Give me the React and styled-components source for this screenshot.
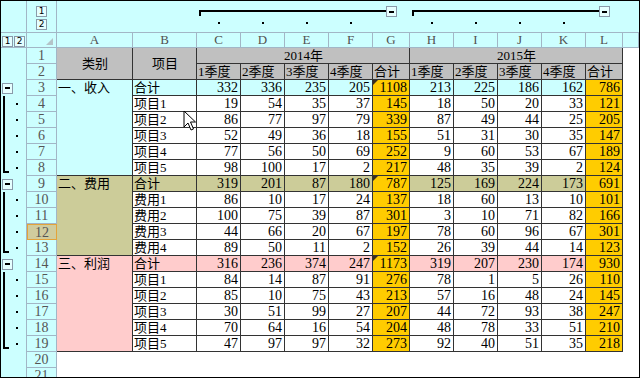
import React from 'react';
import styled, { createGlobalStyle } from 'styled-components';

const CYAN = '#ccffff';
const OLIVE = '#cccc99';
const PINK = '#ffcccc';
const GOLD = '#ffcc00';
const GRAY = '#c0c0c0';
const HEAD_LINE = '#a2b6c6';
const GRID_LINE = '#333';

const COLS = ['A', 'B', 'C', 'D', 'E', 'F', 'G', 'H', 'I', 'J', 'K', 'L', ''];

const sections = [
  {
    label: '一、收入', tone: CYAN, rows: [
      ['合计', 332, 336, 235, 205, 1108, 213, 225, 186, 162, 786],
      ['项目1', 19, 54, 35, 37, 145, 18, 50, 20, 33, 121],
      ['项目2', 86, 77, 97, 79, 339, 87, 49, 44, 25, 205],
      ['项目3', 52, 49, 36, 18, 155, 51, 31, 30, 35, 147],
      ['项目4', 77, 56, 50, 69, 252, 9, 60, 53, 67, 189],
      ['项目5', 98, 100, 17, 2, 217, 48, 35, 39, 2, 124],
    ],
  },
  {
    label: '二、费用', tone: OLIVE, rows: [
      ['合计', 319, 201, 87, 180, 787, 125, 169, 224, 173, 691],
      ['费用1', 86, 10, 17, 24, 137, 18, 60, 13, 10, 101],
      ['费用2', 100, 75, 39, 87, 301, 3, 10, 71, 82, 166],
      ['费用3', 44, 66, 20, 67, 197, 78, 60, 96, 67, 301],
      ['费用4', 89, 50, 11, 2, 152, 26, 39, 44, 14, 123],
    ],
  },
  {
    label: '三、利润', tone: PINK, rows: [
      ['合计', 316, 236, 374, 247, 1173, 319, 207, 230, 174, 930],
      ['项目1', 84, 14, 87, 91, 276, 78, 1, 5, 26, 110],
      ['项目2', 85, 10, 75, 43, 213, 57, 16, 48, 24, 145],
      ['项目3', 30, 51, 99, 27, 207, 44, 72, 93, 38, 247],
      ['项目4', 70, 64, 16, 54, 204, 48, 78, 33, 51, 210],
      ['项目5', 47, 97, 97, 32, 273, 92, 40, 51, 35, 218],
    ],
  },
];

// sheet row n sits on grid row n + 3, column A on grid column 3
let next = 3;
const blocks = sections.map(sec => {
  const start = next;
  next += sec.rows.length;
  return { ...sec, start, end: next - 1 };
});

const ACTIVE_ROW = 12;

const Global = createGlobalStyle`
  body { margin: 0; background: #fff; }
`;

const Sheet = styled.div`
  position: relative;
  width: 640px;
  height: 378px;
  box-sizing: border-box;
  border: 1px solid #000;
  overflow: hidden;
  display: grid;
  grid-template-columns: 26px 30px 76px 64px repeat(4, 44px) 37px repeat(4, 44px) 37px 1fr;
  grid-template-rows: 17px 15px 15px repeat(21, 16px);
  background: ${CYAN};
  font-family: "Liberation Serif", "Noto Sans CJK SC", serif;
`;

const Pad = styled.div`
  grid-column: ${p => p.$col};
  grid-row: ${p => p.$row};
  box-sizing: border-box;
  border-right: 1px solid ${HEAD_LINE};
  border-bottom: 1px solid ${HEAD_LINE};
`;

const Band = styled.div`
  grid-column: 3 / -1;
  grid-row: 1 / 3;
  border-bottom: 1px solid ${HEAD_LINE};
`;

const LevelStack = styled(Pad)`
  display: flex;
  flex-direction: ${p => (p.$across ? 'row' : 'column')};
  align-items: center;
  justify-content: ${p => (p.$across ? 'flex-start' : 'flex-start')};
  gap: ${p => (p.$across ? '1px' : '2px')};
  padding: ${p => (p.$across ? '3px 0 0 1px' : '5px 0 0 0')};
  align-content: flex-start;
  align-items: ${p => (p.$across ? 'flex-start' : 'center')};
`;

const LevelBtn = styled.div`
  width: 11px;
  height: 11px;
  box-sizing: border-box;
  border: 1px solid #8a9aaa;
  background: #e6ffff;
  font: 9px/9px "DejaVu Sans", sans-serif;
  color: #000;
  text-align: center;
`;

const SelectAll = styled(Pad)`
  display: flex;
  justify-content: flex-end;
  align-items: flex-end;
  padding: 0 3px 2px 0;
  &::after {
    content: '';
    border-left: 7px solid transparent;
    border-bottom: 7px solid #b4c4c8;
  }
`;

const ColHead = styled(Pad)`
  font: 13px/14px "Liberation Serif", serif;
  color: #505050;
  text-align: center;
`;

const RowHead = styled(Pad)`
  font: 14px/15px "Liberation Serif", serif;
  color: #555;
  text-align: center;
  background: ${p => (p.$active ? '#d0cc9e' : CYAN)};
  border: ${p => (p.$active ? '1px solid #e3a33a' : 'none')};
  border-right: 1px solid ${p => (p.$active ? '#e3a33a' : HEAD_LINE)};
  border-bottom: 1px solid ${p => (p.$active ? '#e3a33a' : HEAD_LINE)};
`;

const OutlineStrip = styled.div`
  grid-column: 1;
  grid-row: 4 / -1;
  border-right: 1px solid ${HEAD_LINE};
`;

const MinusBtn = styled.div`
  width: 11px;
  height: 11px;
  box-sizing: border-box;
  border: 1px solid #8a9aaa;
  background: #e6ffff;
  display: flex;
  align-items: center;
  justify-content: center;
  flex: none;
  &::after {
    content: '';
    width: 5px;
    height: 2px;
    background: #000;
  }
`;

const RowMinus = styled(MinusBtn)`
  grid-column: 1;
  grid-row: ${p => p.$row};
  align-self: center;
  justify-self: start;
  margin-left: 1px;
`;

const RowBracket = styled.div`
  grid-column: 1;
  grid-row: ${p => p.$from} / ${p => p.$to};
  justify-self: start;
  width: 4px;
  margin: 0 0 3px 2px;
  border-left: 2px solid #000;
  border-bottom: 2px solid #000;
`;

const RowDot = styled.div`
  grid-column: 1;
  grid-row: ${p => p.$row};
  justify-self: start;
  align-self: center;
  margin-left: 15px;
  width: 2px;
  height: 2px;
  background: #000;
`;

const ColBracket = styled.div`
  grid-row: 1;
  grid-column: ${p => p.$span};
  display: flex;
  align-items: flex-start;
  padding: 5px 13px 0 2px;
`;

const BracketLine = styled.div`
  flex: 1;
  height: 4px;
  margin-top: 4px;
  border-top: 2px solid #000;
  border-left: 2px solid #000;
`;

const ColDot = styled.div`
  grid-row: 2;
  grid-column: ${p => p.$col};
  justify-self: center;
  align-self: start;
  margin-top: 4px;
  width: 2px;
  height: 2px;
  background: #000;
`;

const Cell = styled.div`
  position: relative;
  grid-column: ${p => p.$col};
  grid-row: ${p => p.$row};
  box-sizing: border-box;
  background: ${p => p.$bg};
  border-right: 1px solid ${GRID_LINE};
  border-bottom: 1px solid ${GRID_LINE};
  display: flex;
  align-items: ${p => (p.$top ? 'flex-start' : 'center')};
  justify-content: ${p => p.$justify || 'flex-start'};
  padding: 0 ${p => (p.$justify === 'flex-end' ? '2px' : '0')} 0 ${p => (p.$justify === 'flex-end' ? '0' : '1px')};
  font-size: ${p => (p.$num ? '14px' : '13px')};
  line-height: 15px;
  color: #000;
  white-space: nowrap;
  overflow: hidden;
  &::before {
    content: '';
    display: ${p => (p.$mark ? 'block' : 'none')};
    position: absolute;
    top: 0;
    left: 0;
    border-top: 5px solid #3a3020;
    border-right: 5px solid transparent;
  }
`;

const Blank = styled.div`
  grid-column: ${p => p.$col};
  grid-row: ${p => p.$row};
  background: #fff;
`;

const Pointer = styled.svg`
  position: absolute;
  left: 182px;
  top: 109px;
  pointer-events: none;
`;

const YEAR_COLS = [
  { label: '2014年', start: 5 },
  { label: '2015年', start: 10 },
];

export default function App() {
  return (
    <>
      <Global />
      <Sheet>
        {/* outline band and headers */}
        <Pad $col={1} $row="1 / 3" />
        <LevelStack $col={2} $row="1 / 3">
          <LevelBtn>1</LevelBtn>
          <LevelBtn>2</LevelBtn>
        </LevelStack>
        <Band />
        {YEAR_COLS.map(y => (
          <ColBracket key={y.label} $span={`${y.start} / ${y.start + 5}`}>
            <BracketLine />
            <MinusBtn />
          </ColBracket>
        ))}
        {YEAR_COLS.map(y => [0, 1, 2, 3].map(i => (
          <ColDot key={y.label + i} $col={y.start + i} />
        )))}

        <LevelStack $col={1} $row={3} $across>
          <LevelBtn>1</LevelBtn>
          <LevelBtn>2</LevelBtn>
        </LevelStack>
        <SelectAll $col={2} $row={3} />
        {COLS.map((c, i) => (
          <ColHead key={i} $col={i + 3} $row={3}>{c}</ColHead>
        ))}
        {Array.from({ length: 21 }, (_, i) => (
          <RowHead key={i} $col={2} $row={i + 4} $active={i + 1 === ACTIVE_ROW}>{i + 1}</RowHead>
        ))}

        {/* row outline */}
        <OutlineStrip />
        {blocks.map(b => (
          <React.Fragment key={b.label}>
            <RowMinus $row={b.start + 3} />
            <RowBracket $from={b.start + 4} $to={b.end + 4} />
            {b.rows.slice(1).map((_, i) => (
              <RowDot key={i} $row={b.start + i + 4} />
            ))}
          </React.Fragment>
        ))}

        {/* table header */}
        <Cell $col={3} $row="4 / 6" $bg={GRAY} $justify="center">类别</Cell>
        <Cell $col={4} $row="4 / 6" $bg={GRAY} $justify="center">项目</Cell>
        {YEAR_COLS.map(y => (
          <Cell key={y.label} $col={`${y.start} / ${y.start + 5}`} $row={4} $bg={GRAY} $justify="center">{y.label}</Cell>
        ))}
        {YEAR_COLS.map(y => ['1季度', '2季度', '3季度', '4季度', '合计'].map((t, i) => (
          <Cell key={y.label + t} $col={y.start + i} $row={5} $bg={GRAY}>{t}</Cell>
        )))}

        {/* body */}
        {blocks.map(b => (
          <React.Fragment key={b.label}>
            <Cell $col={3} $row={`${b.start + 3} / ${b.end + 4}`} $bg={b.tone} $top>{b.label}</Cell>
            {b.rows.map((row, ri) => {
              const gridRow = b.start + ri + 3;
              const rowBg = ri === 0 ? b.tone : '#fff';
              return (
                <React.Fragment key={ri}>
                  <Cell $col={4} $row={gridRow} $bg={rowBg}>{row[0]}</Cell>
                  {row.slice(1).map((v, vi) => {
                    const total = vi === 4 || vi === 9;
                    return (
                      <Cell
                        key={vi}
                        $col={vi + 5}
                        $row={gridRow}
                        $bg={total ? GOLD : rowBg}
                        $justify="flex-end"
                        $num
                        $mark={vi === 4 && ri === 0}
                      >
                        {v}
                      </Cell>
                    );
                  })}
                </React.Fragment>
              );
            })}
          </React.Fragment>
        ))}

        <Blank $col="15" $row="4 / 23" />
        <Blank $col="3 / -1" $row="23 / -1" />

        <Pointer width="14" height="22" viewBox="0 0 14 22">
          <path d="M1 1 L1 17 L5 13 L8 20 L10.5 19 L7.5 12 L12.5 12 Z" fill="#fff" stroke="#000" strokeWidth="1" strokeLinejoin="round" />
        </Pointer>
      </Sheet>
    </>
  );
}
